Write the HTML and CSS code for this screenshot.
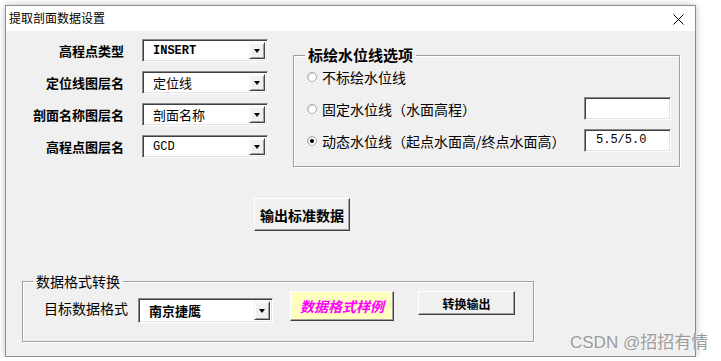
FILE: index.html
```html
<!DOCTYPE html>
<html lang="zh-CN">

<head>
    <meta charset="UTF-8">
    <meta name="viewport" content="width=device-width, initial-scale=1.0">
    <title>提取剖面数据设置</title>
    <link rel="stylesheet" href="styles.css">
</head>

<body>
    <div class="window">
        <div class="titlebar">
            <span class="title">提取剖面数据设置</span>
            <svg class="close" width="11" height="11" viewBox="0 0 11 11">
                <path d="M0.5 0.5 L10.5 10.5 M10.5 0.5 L0.5 10.5" stroke="#000" stroke-width="1" fill="none" />
            </svg>
        </div>
        <div class="client">
            <div class="top">
                <div class="fields">
                    <div class="field">
                        <span class="label">高程点类型</span>
                        <div class="combo"><span class="val mono">INSERT</span><span class="drop"></span></div>
                    </div>
                    <div class="field">
                        <span class="label">定位线图层名</span>
                        <div class="combo"><span class="val">定位线</span><span class="drop"></span></div>
                    </div>
                    <div class="field">
                        <span class="label">剖面名称图层名</span>
                        <div class="combo"><span class="val">剖面名称</span><span class="drop"></span></div>
                    </div>
                    <div class="field">
                        <span class="label">高程点图层名</span>
                        <div class="combo"><span class="val plain">GCD</span><span class="drop"></span></div>
                    </div>
                </div>

                <fieldset class="group water">
                    <legend>标绘水位线选项</legend>
                    <div class="opt">
                        <span class="radio"></span><span class="opt-text">不标绘水位线</span>
                    </div>
                    <div class="opt">
                        <span class="radio"></span><span class="opt-text">固定水位线（水面高程）</span>
                        <div class="textbox"></div>
                    </div>
                    <div class="opt">
                        <span class="radio on"></span><span class="opt-text">动态水位线（起点水面高/终点水面高）</span>
                        <div class="textbox">5.5/5.0</div>
                    </div>
                </fieldset>
            </div>

            <div class="action">
                <div class="btn big">输出标准数据</div>
            </div>

            <fieldset class="group convert">
                <legend>数据格式转换</legend>
                <div class="convert-row">
                    <span class="target-label">目标数据格式</span>
                    <div class="combo wide"><span class="val bold">南京捷鹰</span><span class="drop"></span></div>
                    <div class="btn sample">数据格式样例</div>
                    <div class="btn small">转换输出</div>
                </div>
            </fieldset>
        </div>
    </div>
    <div class="watermark">CSDN @招招有情</div>
</body>

</html>
```

FILE: styles.css
```css
body {
    margin: 0;
    padding: 5px 0 0 5px;
    background-color: white;
    font-family: "Noto Sans CJK SC", "DejaVu Sans", sans-serif;
    color: black;
}

.window {
    width: 689px;
    height: 350px;
    border: 1px solid #8c8c8c;
    box-shadow: 0 0 7px rgba(0, 0, 0, 0.25);
    display: flex;
    flex-direction: column;
    background-color: #f0f0f0;
}

.titlebar {
    height: 25px;
    background-color: white;
    display: flex;
    align-items: center;
    justify-content: space-between;
    padding: 0 11px 0 3px;
}

.title {
    font-size: 12px;
    line-height: 14px;
    margin-top: -1px;
}

.close {
    margin-top: 1px;
}

.client {
    flex: 1;
}

.top {
    display: flex;
}

.fields {
    display: flex;
    flex-direction: column;
    gap: 9px;
    padding-top: 8px;
}

.field {
    display: flex;
    align-items: center;
    gap: 18px;
    height: 23px;
}

.label {
    width: 118px;
    text-align: right;
    font-size: 13px;
    font-weight: bold;
    white-space: nowrap;
}

/* sunken combo box */
.combo {
    width: 126px;
    height: 23px;
    box-sizing: border-box;
    border: 1px solid;
    border-color: #8a8a8a #fff #fff #8a8a8a;
    box-shadow: inset 1px 1px #404040, inset -1px -1px #e3e3e3;
    background-color: white;
    display: flex;
    align-items: center;
    justify-content: space-between;
    padding: 2px 2px 2px 10px;
}

.combo.wide {
    width: 135px;
    height: 25px;
    margin-top: 7px;
}

.val {
    font-size: 13px;
    line-height: 16px;
    white-space: nowrap;
}

.val.mono {
    font-family: "Liberation Mono", monospace;
    font-weight: bold;
    font-size: 12px;
}

.val.plain {
    font-family: "Liberation Mono", monospace;
    font-size: 12px;
}

.val.bold {
    font-weight: bold;
}

.drop {
    width: 16px;
    height: 100%;
    box-sizing: border-box;
    background-color: #f0f0f0;
    border: 1px solid;
    border-color: #f0f0f0 #404040 #404040 #f0f0f0;
    box-shadow: inset 1px 1px #fff, inset -1px -1px #a0a0a0;
    display: flex;
    align-items: center;
    justify-content: center;
}

.drop::after {
    content: "";
    border-left: 3.5px solid transparent;
    border-right: 3.5px solid transparent;
    border-top: 4px solid black;
    margin-top: 1px;
}

/* group boxes */
.group {
    margin: 0;
    padding: 0;
    border: 1px solid #a0a0a0;
    box-shadow: 1px 1px white, inset 1px 1px white;
    min-inline-size: 0;
}

.group legend {
    padding: 0 3px;
    margin-left: 10px;
}

.water {
    width: 387px;
    height: 121px;
    box-sizing: border-box;
    margin-left: 25px;
    margin-top: 15px;
    padding: 1px 8px 0 13px;
    display: flex;
    flex-direction: column;
    gap: 9px;
}

.water legend {
    font-size: 15px;
    font-weight: bold;
    line-height: 18px;
    margin-left: -2px;
}

.opt {
    height: 23px;
    display: flex;
    align-items: center;
}

.radio {
    width: 10px;
    height: 10px;
    box-sizing: border-box;
    border-radius: 50%;
    border: 1px solid #a8a8a8;
    background-color: white;
    box-shadow: inset 1px 1px #dcdcdc;
    margin-right: 5px;
    display: flex;
    align-items: center;
    justify-content: center;
}

.radio.on::after {
    content: "";
    width: 4px;
    height: 4px;
    border-radius: 50%;
    background-color: black;
}

.opt-text {
    font-size: 14px;
    white-space: nowrap;
}

.textbox {
    margin-left: auto;
    width: 87px;
    height: 23px;
    box-sizing: border-box;
    border: 1px solid;
    border-color: #8a8a8a #fff #fff #8a8a8a;
    box-shadow: inset 1px 1px #404040, inset -1px -1px #e3e3e3;
    background-color: white;
    font-family: "Liberation Mono", monospace;
    font-size: 12px;
    line-height: 21px;
    padding-left: 11px;
}

/* raised buttons */
.btn {
    box-sizing: border-box;
    background-color: #f0f0f0;
    border: 1px solid;
    border-color: #fff #404040 #404040 #fff;
    box-shadow: inset -1px -1px #a0a0a0;
    display: flex;
    align-items: center;
    justify-content: center;
    font-weight: bold;
    white-space: nowrap;
}

.action {
    padding: 31px 0 0 248px;
}

.btn.big {
    width: 96px;
    height: 33px;
    font-size: 14px;
}

.convert {
    width: 512px;
    height: 69px;
    box-sizing: border-box;
    margin: 42px 0 0 16px;
}

.convert legend {
    font-size: 14px;
    line-height: 17px;
}

.convert-row {
    display: flex;
    align-items: flex-start;
    padding: 1px 0 0 21px;
}

.target-label {
    font-size: 14px;
    line-height: 25px;
    margin-top: 5px;
    margin-right: 10px;
}

.btn.sample {
    width: 104px;
    height: 30px;
    margin-left: 17px;
    background-color: #ffffc0;
    color: #ff00ff;
    font-style: italic;
    font-size: 14px;
}

.btn.small {
    width: 97px;
    height: 24px;
    margin-left: 24px;
    font-size: 12px;
}

.watermark {
    position: absolute;
    left: 570px;
    top: 332px;
    font-family: "Liberation Sans", "Noto Sans CJK SC", sans-serif;
    font-size: 17px;
    line-height: 21px;
    color: #9a9a9a;
    text-shadow: 0 0 2px white;
}
```
